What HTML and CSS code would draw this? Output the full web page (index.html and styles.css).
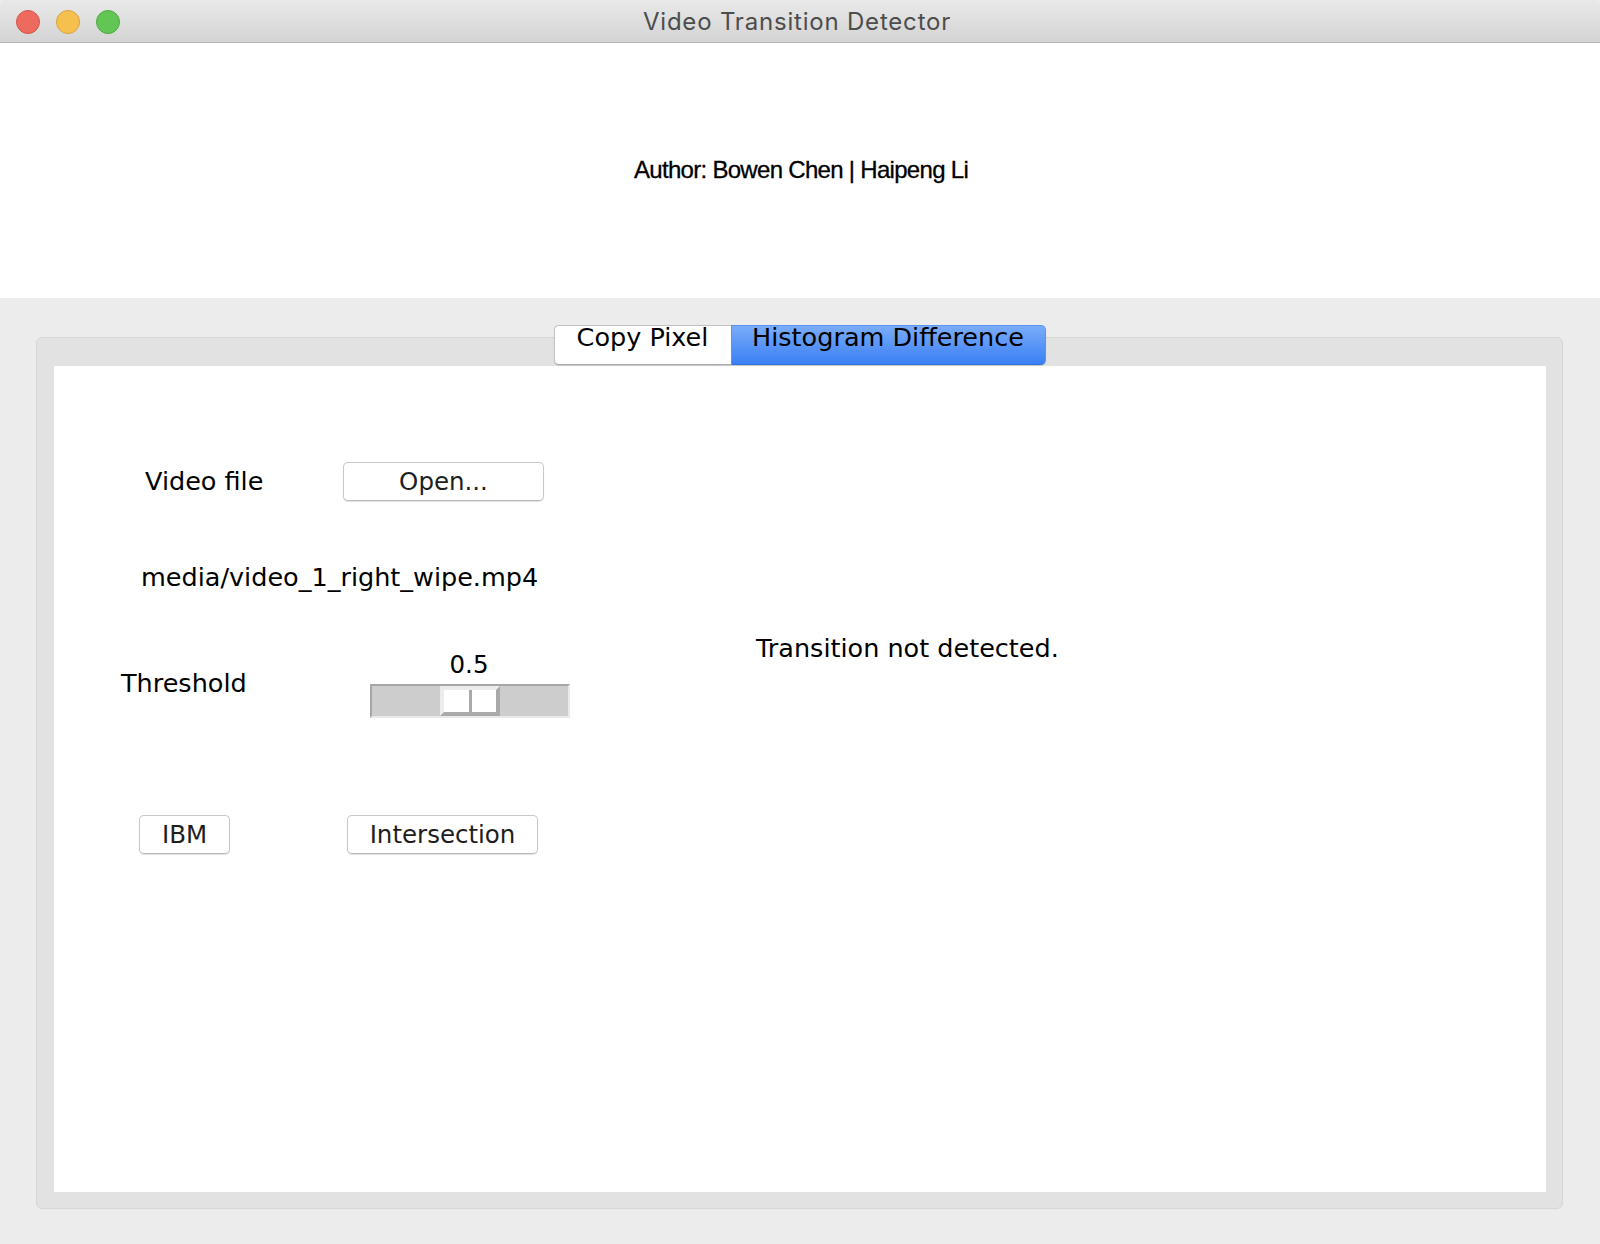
FILE: index.html
```html
<!DOCTYPE html>
<html>
<head>
<meta charset="utf-8">
<title>Video Transition Detector</title>
<link rel="stylesheet" href="styles.css">
</head>
<body>
<div class="window">
  <div class="titlebar">
    <div class="lights">
      <span class="light red"></span>
      <span class="light yellow"></span>
      <span class="light green"></span>
    </div>
    <div class="title">Video Transition Detector</div>
    <div class="spacer"></div>
  </div>
  <div class="header">
    <p class="author">Author: Bowen Chen | Haipeng Li</p>
  </div>
  <div class="main">
    <div class="tabs">
      <div class="tab tab-first">Copy Pixel</div>
      <div class="tab tab-last active">Histogram Difference</div>
    </div>
    <div class="frame">
      <div class="page">
        <div class="row row-file">
          <div class="cell-label label-video">Video file</div>
          <button class="btn btn-open">Open...</button>
        </div>
        <div class="row row-path">
          <div class="path">media/video_1_right_wipe.mp4</div>
        </div>
        <div class="row row-threshold">
          <div class="cell-threshold">Threshold</div>
          <div class="slider-col">
            <div class="slider-value">0.5</div>
            <div class="trough">
              <div class="handle">
                <span class="half"></span>
                <span class="half"></span>
              </div>
            </div>
          </div>
          <div class="status">Transition not detected.</div>
        </div>
        <div class="row row-methods">
          <button class="btn btn-ibm">IBM</button>
          <button class="btn btn-inter">Intersection</button>
        </div>
      </div>
    </div>
  </div>
</div>
</body>
</html>
```

FILE: styles.css
```css
html, body {
  margin: 0;
  padding: 0;
}
body {
  width: 1600px;
  height: 1244px;
  overflow: hidden;
  background: #ececec;
  font-family: "DejaVu Sans", "Liberation Sans", sans-serif;
  color: #000;
}
.window {
  display: flex;
  flex-direction: column;
  height: 1244px;
}

/* title bar */
.titlebar {
  height: 43px;
  box-sizing: border-box;
  border-bottom: 1px solid #b4b4b4;
  background: linear-gradient(#e9e9e9, #d4d4d4);
  border-radius: 6px 6px 0 0;
  display: grid;
  grid-template-columns: 1fr auto 1fr;
  align-items: center;
}
.lights {
  display: flex;
  gap: 16px;
  padding-left: 16px;
  margin-top: 2px;
}
.light {
  width: 24px;
  height: 24px;
  box-sizing: border-box;
  border-radius: 50%;
  border: 1px solid;
}
.red { background: #ee6a5f; border-color: #d5544b; }
.yellow { background: #f6c04f; border-color: #dba23c; }
.green { background: #62c655; border-color: #4fa940; }
.title {
  font-family: "Inter", "Liberation Sans", sans-serif;
  font-size: 24px;
  letter-spacing: 0.8px;
  color: #4d4d4d;
  line-height: 40px;
  padding-top: 2px;
  padding-right: 6px;
}

/* header */
.header {
  height: 255px;
  background: #fff;
  display: flex;
  align-items: center;
  justify-content: center;
}
.author {
  margin: 0 0 2px 0;
  font-family: "Liberation Sans", Arial, sans-serif;
  font-size: 24px;
  line-height: 28px;
  letter-spacing: -0.7px;
  -webkit-text-stroke: 0.3px #000;
  padding-left: 2px;
}

/* main grey area */
.main {
  flex: 1;
  padding: 27px 37px 35px 36px;
  display: flex;
  flex-direction: column;
}
.tabs {
  display: flex;
  justify-content: center;
  margin-bottom: -28px;
  position: relative;
  z-index: 1;
}
.tab {
  height: 40px;
  box-sizing: border-box;
  font-size: 25.5px;
  line-height: 23px;
  text-align: center;
  border: 1px solid #c3c3c3;
  border-bottom-color: #a9a9a9;
  background: #fff;
  box-shadow: 0 1px 1px rgba(0,0,0,0.12);
}
.tab-first {
  width: 177px;
  border-radius: 5px 0 0 5px;
  border-right: none;
}
.tab-last {
  width: 315px;
  border-radius: 0 5px 5px 0;
}
.tab.active {
  background: linear-gradient(#7aacf8, #3a7ff5);
  border-color: #5a94f2;
  border-bottom-color: #2f6fe0;
}
.frame {
  height: 872px;
  box-sizing: border-box;
  background: #e2e2e2;
  border: 1px solid #d6d6d6;
  border-radius: 6px;
  padding: 28px 16px 16px 17px;
}
.page {
  background: #fff;
  height: 826px;
  display: flex;
  flex-direction: column;
  font-size: 25.5px;
  line-height: 29px;
}

/* rows */
.row {
  display: flex;
}
.row-file {
  margin-top: 96px;
  height: 39px;
  align-items: center;
}
.cell-label {
  width: 289px;
  box-sizing: border-box;
  padding-left: 91px;
}
.btn {
  font-family: inherit;
  font-size: 24.5px;
  color: #1e1e1e;
  height: 39px;
  box-sizing: border-box;
  line-height: 37px;
  padding: 0;
  background: #fff;
  border: 1px solid #c8c8c8;
  border-bottom-color: #b8b8b8;
  border-radius: 5px;
  box-shadow: 0 1px 1px rgba(0,0,0,0.12);
  text-align: center;
}
.btn-open { width: 201px; }

.row-path {
  margin-top: 62px;
  padding-left: 87px;
}

.row-threshold {
  margin-top: 42px;
  align-items: flex-start;
}
.cell-threshold {
  width: 316px;
  box-sizing: border-box;
  padding-left: 67px;
  margin-top: 35px;
}
.slider-col {
  width: 200px;
  margin-top: 16px;
  display: flex;
  flex-direction: column;
}
.slider-value {
  text-align: center;
  padding-right: 2px;
  font-size: 24.5px;
}
.trough {
  margin-top: 5px;
  height: 34px;
  box-sizing: border-box;
  border: 2px solid;
  border-color: #a6a6a6 #e9e9e9 #e9e9e9 #a6a6a6;
  background: #cdcdcd;
  display: flex;
}
.handle {
  margin-left: 68px;
  width: 60px;
  height: 30px;
  box-sizing: border-box;
  border: 4px solid;
  border-color: #ececec #a9a9a9 #a9a9a9 #ececec;
  background: #a9a9a9;
  display: flex;
  gap: 3px;
}
.half {
  flex: 1;
  background: #fff;
}
.status {
  margin-left: 186px;
}

.row-methods {
  margin-top: 97px;
}
.btn-ibm {
  margin-left: 85px;
  width: 91px;
}
.btn-inter {
  margin-left: 117px;
  width: 191px;
}
```
